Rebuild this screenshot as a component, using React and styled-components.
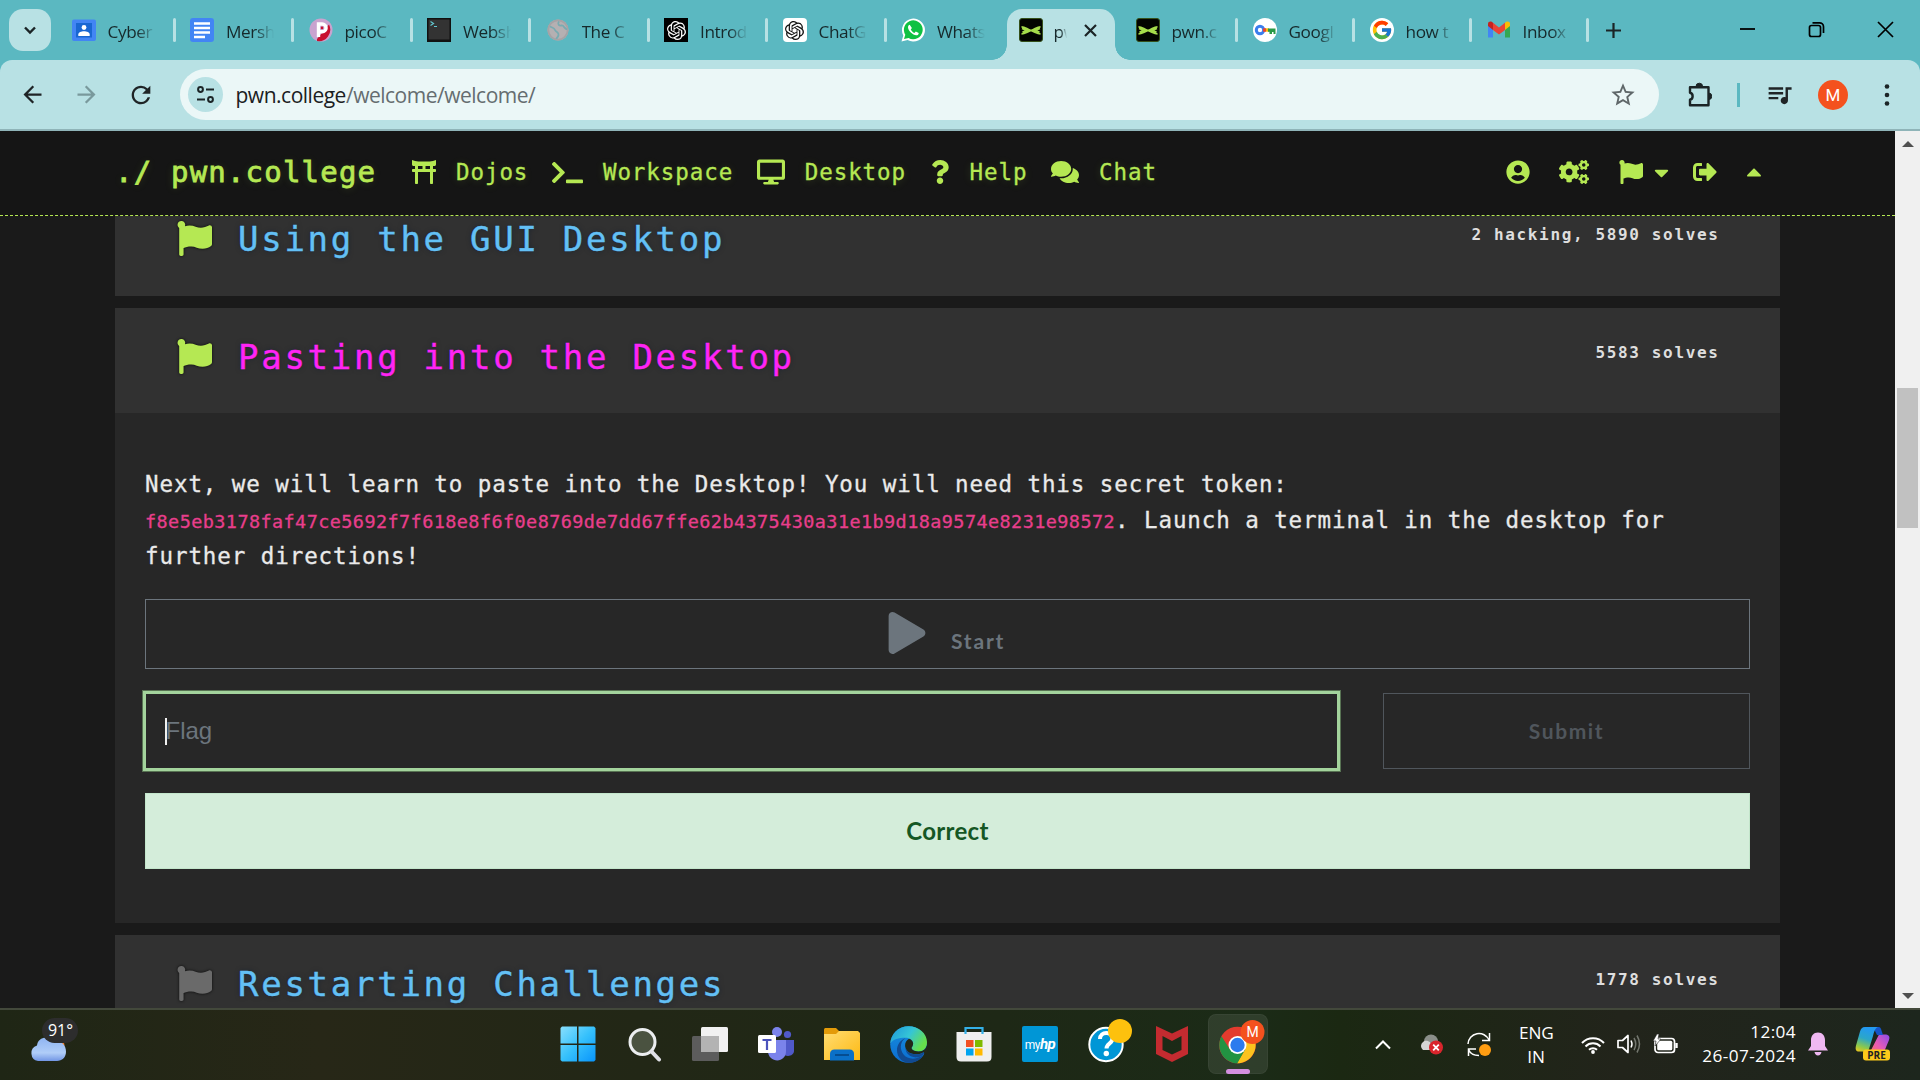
import React from "react";
import styled, { createGlobalStyle } from "styled-components";
import {
  FaToriiGate, FaTerminal, FaDesktop, FaQuestion, FaComments, FaUserCircle, FaCogs,
  FaFlag, FaCaretDown, FaCaretUp, FaSignOutAlt, FaPlay,
} from "react-icons/fa";
import { MdQueueMusic, MdStarOutline, MdArrowBack, MdArrowForward, MdRefresh } from "react-icons/md";
import { SiOpenai } from "react-icons/si";
import { FcGoogle } from "react-icons/fc";

const UI = `"Open Sans", "Noto Sans", sans-serif`;
const MONO = `"DejaVu Sans Mono", "Liberation Mono", monospace`;
const LIME = "#b5e853";

const Global = createGlobalStyle`
  * { box-sizing: border-box; }
  body { margin: 0; background: #1a1a1a; overflow: hidden; }
  svg { display: block; flex: none; }
`;

const Screen = styled.div`
  width: 1920px;
  height: 1080px;
  display: flex;
  flex-direction: column;
  overflow: hidden;
  font-family: ${UI};
`;

/* ---------- browser tabs ---------- */
const TabStrip = styled.div`
  height: 60px;
  flex: none;
  display: flex;
  align-items: flex-start;
  background: #5bb8c1;
  padding-left: 9px;
`;
const TabSearch = styled.div`
  width: 42px;
  height: 42px;
  margin: 9px 6px 0 0;
  border-radius: 14px;
  background: #b8e1e4;
  display: grid;
  place-items: center;
`;
const Tab = styled.div`
  width: ${(p) => p.$w}px;
  height: 60px;
  padding: 0 0 0 14.5px;
  display: flex;
  align-items: center;
`;
const Favicon = styled.div`
  width: 24px;
  height: 24px;
  flex: none;
`;
const TabTitle = styled.div`
  width: ${(p) => p.$w || 48}px;
  margin-left: ${(p) => (p.$w ? 11 : 12)}px;
  flex: none;
  overflow: hidden;
  white-space: nowrap;
  font-size: 17.2px;
  letter-spacing: -0.4px;
  line-height: 24px;
  padding-top: 3px;
  color: #16292b;
  mask-image: linear-gradient(90deg, #000 ${(p) => (p.$w ? 50 : 60)}%, transparent 100%);
`;
const Separator = styled.div`
  width: 3px;
  height: 24px;
  margin-left: auto;
  border-radius: 2px;
  background: ${(p) => (p.$hidden ? "transparent" : "#b8e1e4")};
`;
const ActiveTab = styled.div`
  width: 108px;
  height: 51px;
  margin: 9px 6.5px 0 1px;
  padding: 0 0 9px 12px;
  display: flex;
  align-items: center;
  border-radius: 15px 15px 0 0;
  background: #b8e1e4;
  position: relative;
  &::before, &::after {
    content: "";
    position: absolute;
    bottom: 0;
    width: 15px;
    height: 15px;
  }
  &::before { left: -15px; background: radial-gradient(circle at 0 0, transparent 14.5px, #b8e1e4 15px); }
  &::after { right: -15px; background: radial-gradient(circle at 100% 0, transparent 14.5px, #b8e1e4 15px); }
`;
const CloseTab = styled.div`
  margin-left: 16px;
`;
const NewTab = styled.div`
  margin: 22px 0 0 15.5px;
`;
const WindowControls = styled.div`
  margin: 21px 26px 0 auto;
  display: flex;
  gap: 52px;
`;

/* ---------- browser toolbar ---------- */
const ToolbarWrap = styled.div`
  flex: none;
  background: #5bb8c1;
`;
const Toolbar = styled.div`
  height: 71px;
  display: flex;
  align-items: center;
  padding: 0 21px 0 19px;
  background: #b8e1e4;
  border-bottom: 2px solid #8fb4b8;
  border-radius: 12px 12px 0 0;
  color: #1f2426;
`;
const NavButton = styled.div`
  width: 54px;
  color: ${(p) => (p.$off ? "#79999c" : "#1f2426")};
`;
const Omnibox = styled.div`
  width: 1479px;
  height: 51px;
  margin-left: -1px;
  padding: 0 22px 0 8px;
  display: flex;
  align-items: center;
  border-radius: 26px;
  background: #ebf7f7;
  color: #5f6769;
`;
const SiteInfo = styled.div`
  width: 35px;
  height: 35px;
  border-radius: 50%;
  background: #b8e1e4;
  display: grid;
  place-items: center;
`;
const Url = styled.div`
  flex: 1;
  margin-left: 12.5px;
  font-size: 21px;
  line-height: 30px;
  letter-spacing: -0.49px;
  color: #656d70;
  span { color: #1b2022; }
`;
const ToolGroup = styled.div`
  flex: 1;
  display: flex;
  align-items: center;
  padding-left: 28px;
`;
const ToolDivider = styled.div`
  width: 3px;
  height: 24px;
  margin: 0 25px;
  background: #5bb8c1;
`;
const Avatar = styled.div`
  width: 30px;
  height: 30px;
  margin: 0 36px 0 24px;
  border-radius: 50%;
  background: #f4511e;
  color: #fff;
  font: 17px/30px Roboto, sans-serif;
  text-align: center;
`;

/* ---------- web page ---------- */
const Viewport = styled.div`
  height: 877px;
  flex: none;
  display: flex;
`;
const Page = styled.div`
  width: 1895px;
  display: flex;
  flex-direction: column;
  background: #1a1a1a;
  overflow: hidden;
`;
const NavBar = styled.div`
  height: 85px;
  flex: none;
  display: flex;
  align-items: center;
  padding: 0 129px 2px 115px;
  background: #151515;
  border-bottom: 1px dashed ${LIME};
  color: ${LIME};
  font-family: ${MONO};
  text-shadow: 0 1px 8px rgba(181, 232, 83, 0.18);
`;
const Brand = styled.div`
  width: 297px;
  font-size: 29px;
  -webkit-text-stroke: 0.8px ${LIME};
  letter-spacing: 1.2px;
  line-height: 40px;
  white-space: pre;
`;
const NavItem = styled.div`
  display: flex;
  align-items: center;
  margin-right: 23.6px;
`;
const NavIcon = styled.div`
  width: ${(p) => p.$w}px;
  margin-right: 20px;
  display: flex;
  justify-content: center;
`;
const NavLabel = styled.div`
  font-size: 22.5px;
  letter-spacing: 0.92px;
  line-height: 30px;
  -webkit-text-stroke: 0.3px ${LIME};
`;
const NavActions = styled.div`
  display: flex;
  align-items: center;
  margin-left: auto;
`;
const Action = styled.div`
  margin-left: ${(p) => p.$gap}px;
`;
const Challenges = styled.div`
  padding: 0 115px;
  display: flex;
  flex-direction: column;
  gap: 12px;
`;
const HeaderRow = styled.div`
  height: ${(p) => p.$h}px;
  padding: ${(p) => p.$top}px 61.5px 0 62px;
  display: flex;
  align-items: flex-start;
  background: #313131;
  overflow: hidden;
`;
const FlagMark = styled.div`
  color: ${(p) => (p.$solved ? LIME : "#6a6a6a")};
  filter: drop-shadow(0 0 1.5px rgba(0, 0, 0, 0.8));
`;
const Title = styled.div`
  margin: -7px 0 0 26px;
  font-family: ${MONO};
  font-size: 34px;
  letter-spacing: 2.73px;
  line-height: 50px;
  white-space: nowrap;
  color: ${(p) => (p.$open ? "#ff24f5" : "#63c0f5")};
  -webkit-text-stroke: 0.4px ${(p) => (p.$open ? "#ff24f5" : "#63c0f5")};
  text-shadow: 0 0 5px rgba(0, 25, 50, 0.5);
`;
const Solves = styled.div`
  margin: 0 -1px 0 auto;
  font-family: ${MONO};
  font-weight: 700;
  font-size: 16px;
  letter-spacing: 1.64px;
  line-height: 28px;
  color: #dedede;
`;
const Body = styled.div`
  height: 510px;
  padding: 53px 30px 0;
  background: #272727;
`;
const Text = styled.div`
  height: 133px;
  font-family: ${MONO};
  font-size: 22.5px;
  letter-spacing: 0.92px;
  line-height: 36px;
  white-space: nowrap;
  color: #eaeaea;
  -webkit-text-stroke: 0.3px currentColor;
`;
const Token = styled.span`
  font-size: 18.5px;
  letter-spacing: 0.41px;
  line-height: 20px;
  color: #e83e8c;
`;
const StartButton = styled.div`
  height: 70px;
  border: 1px solid #6c757d;
  padding-left: 740px;
  display: flex;
  align-items: flex-start;
  color: #6c757d;
  font: 700 21px/30px Lato, sans-serif;
  letter-spacing: 1.8px;
`;
const StartIcon = styled.div`
  margin: 12px 23px 0 0;
`;
const StartLabel = styled.div`
  margin-top: 26px;
`;
const FormRow = styled.div`
  display: flex;
  justify-content: space-between;
  margin: 24px 0;
`;
const FlagInput = styled.div`
  width: 1193px;
  height: 76px;
  padding-left: 19px;
  display: flex;
  align-items: center;
  border: 1px solid #a3d39c;
  box-shadow: 0 0 0 2px #a3d39c, 0 0 0 3px #587353;
  color: #6c757d;
  font: 24px/30px "Liberation Sans", Arial, sans-serif;
`;
const Caret = styled.div`
  width: 2px;
  height: 27px;
  margin-right: -1.5px;
  background: #f0f0f0;
`;
const SubmitButton = styled.div`
  width: 367px;
  height: 76px;
  border: 1px solid #50565c;
  color: #50565c;
  font: 700 21px/74px Lato, sans-serif;
  letter-spacing: 1.6px;
  text-align: center;
`;
const Result = styled.div`
  height: 76px;
  background: #d4edda;
  border: 1px solid #c3e6cb;
  color: #155724;
  font: 700 24px/74px Lato, sans-serif;
  letter-spacing: 0.3px;
  text-align: center;
`;
const ScrollBar = styled.div`
  width: 25px;
  display: flex;
  flex-direction: column;
  align-items: center;
  background: #f0f0f0;
  padding: 10px 0 9px;
`;
const Thumb = styled.div`
  width: 21px;
  height: 140px;
  margin: 241px 0 auto;
  background: #c1c1c1;
`;

/* ---------- taskbar ---------- */
const TaskBar = styled.div`
  height: 72px;
  flex: none;
  display: flex;
  align-items: flex-start;
  border-top: 2px solid #43493b;
  background: linear-gradient(90deg, #1f2615 0, #272717 320px, #222716 640px, #1e2816 1000px, #1b2b17 1250px, #1b2812 1340px, #22241b 1620px, #1d261d 1920px);
`;
const Weather = styled.div`
  width: 545px;
  padding: 6px 0 0 30px;
`;
const Slot = styled.div`
  width: 66px;
  height: 68px;
  display: grid;
  place-items: center;
`;
const ActiveSlot = styled.div`
  width: 60px;
  height: 60px;
  border-radius: 8px;
  background: rgba(255, 255, 255, 0.09);
  border: 1px solid rgba(255, 255, 255, 0.04);
`;
const Tray = styled.div`
  height: 68px;
  margin-left: auto;
  padding-right: 29px;
  display: flex;
  align-items: center;
  color: #fff;
  font-size: 17.2px;
  line-height: 24px;
`;
const TrayIcon = styled.div`
  margin-right: ${(p) => p.$gap}px;
`;
const Lang = styled.div`
  width: 34px;
  margin-right: 28px;
  padding-top: 2px;
  text-align: center;
  white-space: nowrap;
  letter-spacing: -0.1px;
`;
const Clock = styled.div`
  width: 94px;
  margin-right: 12px;
  text-align: right;
  white-space: nowrap;
  letter-spacing: 0.4px;
`;

/* ---------- favicons ---------- */
const Ico = ({ children, vb = "0 0 24 24", w = 24, h = 24 }) => (
  <svg width={w} height={h} viewBox={vb} fill="none">{children}</svg>
);
const ClassroomIcon = () => (
  <Ico><rect y="1.5" width="24" height="21.5" rx="2" fill="#4285f4" /><rect x="4" y="5" width="16" height="14.5" fill="#1967d2" /><circle cx="12" cy="9.5" r="2.4" fill="#fff" /><path d="M6.3 18v-1.6c0-2 3-3.2 5.7-3.2s5.7 1.2 5.7 3.2V18z" fill="#fff" /></Ico>
);
const DocsIcon = () => (
  <Ico><rect width="24" height="24" rx="3" fill="#4285f4" /><path d="M4 5.5h16M4 10h16M4 14.5h16M4 19h11" stroke="#fff" strokeWidth="2.4" /></Ico>
);
const PicoIcon = () => (
  <Ico><circle cx="12" cy="12" r="11.5" fill="#c9a3cf" /><path d="M8 21L20 6.5A11.5 11.5 0 0 1 8 23z" fill="#c8102e" /><path d="M9.500 19V6h3.700a3.900 3.900 0 0 1 0 7.800H9.500" stroke="#fff" strokeWidth="3.4" /><circle cx="13" cy="9.900" r="1.300" fill="#c8102e" /></Ico>
);
const ShellIcon = () => (
  <Ico><rect width="24" height="24" fill="#111" /><rect x="1.500" y="1.500" width="21" height="20" fill="#333" /><path d="M3.500 3.500l3 2-3 2M7 8.500h3" stroke="#62c6cf" strokeWidth="1.2" /></Ico>
);
const GlobeIcon = () => (
  <Ico><circle cx="12" cy="12" r="10.500" fill="#b5b0b2" /><circle cx="12" cy="12" r="9.700" stroke="#a5a3a6" strokeWidth="1.800" /><path d="M4 8.500c2.500 1.500 4 1 5 3.500s4 2 3.500 5-2 2-2 4M13 3.500c-2 2.500 0 4.500 2.500 4s2.500 3 5.500 4" stroke="#78abb1" strokeWidth="1.800" /></Ico>
);
const WhatsIcon = () => (
  <Ico><path d="M.5 23.500l1.800-6A11.500 11.500 0 1 1 6.600 22z" fill="#fff" /><path d="M3 21l1.300-4.300a9.400 9.400 0 1 1 3.300 3.200z" fill="#0fc143" /><path d="M8.700 6.800c-.8 0-1.700 1-1.700 2.500 0 3.400 4.800 8 8.300 8 1.500 0 2.400-1.100 2.400-2.400l-2.900-1.500-1.400 1.500c-1.500-.6-3-2-3.600-3.500l1.100-1.500z" fill="#fff" /></Ico>
);
const PwnIcon = () => (
  <Ico><rect x=".5" y=".5" width="23" height="23" rx="2.500" fill="#020400" stroke="#35501a" /><path d="M2.500 8.800c3.500 0 5.500 2.500 9.500 3.700 4-1.200 6-3.700 9.500-3.700M2.500 15.800c3.500 0 5.500-2 9.500-3.300 4 1.300 6 3.300 9.500 3.300M3 10.500l5 2-4.500 1.500M21 10.500l-5 2 4.500 1.500" stroke="#a5dc4b" strokeWidth="1.800" /></Ico>
);
const KeyIcon = () => (
  <Ico><circle cx="12" cy="12" r="12" fill="#fff" /><circle cx="7" cy="12" r="3.700" stroke="#3b7ded" strokeWidth="3" /><path d="M12 12h4" stroke="#fbbc04" strokeWidth="3.400" /><path d="M15 10.400h7.500V16h-2v-2h-1.500v2h-2.500v-2.300H15z" fill="#2a9947" /><path d="M10 12h3" stroke="#ea4335" strokeWidth="3.400" /></Ico>
);
const GmailIcon = () => (
  <Ico><path d="M1 7v12.500h5V11z" fill="#4285f4" /><path d="M23 7v12.500h-5V11z" fill="#34a853" /><path d="M1 8V6c0-2.500 2.700-3 4-2l1 .8V12z" fill="#c5221f" /><path d="M23 8V6c0-2.500-2.700-3-4-2l-1 .8V12z" fill="#fbbc04" /><path d="M6 4.800V12l6 4.500 6-4.500V4.800l-6 4.700z" fill="#ea4335" /></Ico>
);
const GptBox = styled.div`
  width: 24px;
  height: 24px;
  border-radius: ${(p) => (p.$dark ? 0 : 4)}px;
  display: grid;
  place-items: center;
  background: ${(p) => (p.$dark ? "#000" : "#fff")};
  color: ${(p) => (p.$dark ? "#fff" : "#111")};
`;
const GoogleBox = styled.div`
  width: 24px;
  height: 24px;
  border-radius: 50%;
  display: grid;
  place-items: center;
  background: #fff;
`;

const tabsBefore = [
  ["Cyber", <ClassroomIcon />], ["Mersh", <DocsIcon />], ["picoC", <PicoIcon />],
  ["Websh", <ShellIcon />], ["The C", <GlobeIcon />],
  ["Introd", <GptBox $dark><SiOpenai size={19} /></GptBox>],
  ["ChatG", <GptBox><SiOpenai size={19} /></GptBox>],
  ["Whats", <WhatsIcon />],
];
const tabsAfter = [
  ["pwn.c", <PwnIcon />], ["Googl", <KeyIcon />],
  ["how t", <GoogleBox><FcGoogle size={22} /></GoogleBox>], ["Inbox", <GmailIcon />],
];

/* ---------- taskbar icons ---------- */
const WeatherIcon = () => (
  <svg width="50" height="48" viewBox="30 1016 50 48">
    <defs><linearGradient id="cl" x1="0" y1="0" x2="0" y2="1"><stop offset="0" stopColor="#8fb4f2" /><stop offset=".65" stopColor="#b0cdf8" /><stop offset="1" stopColor="#7296e4" /></linearGradient></defs>
    <circle cx="57" cy="1045" r="7.500" fill="#f47a20" />
    <path d="M38 1061a8 8 0 0 1-1-15.500c1-9 12-10 15-4 7-2 14 2 14 10 0 6-4 9.500-9 9.500z" fill="url(#cl)" />
    <rect x="42" y="1018" width="36" height="25" rx="12.500" fill="#2d2d2d" />
    <text x="60.500" y="1036" textAnchor="middle" fontFamily="Open Sans, sans-serif" fontSize="16" fill="#fff">91°</text>
  </svg>
);
const WinIcon = () => (
  <Ico w={36} h={36} vb="0 0 36 36">
    <defs><linearGradient id="wn" x1="0" y1="0" x2="36" y2="36" gradientUnits="userSpaceOnUse"><stop stopColor="#8be0fd" /><stop offset=".5" stopColor="#36c1fc" /><stop offset="1" stopColor="#0793fb" /></linearGradient></defs>
    <path d="M2 .5h15v17H.5V2zM18.500.5H34l1.500 1.500v15.500h-17zM.5 19H17v16.500H2L.5 34zM18.500 19h17v15L34 35.500H18.500z" fill="url(#wn)" />
  </Ico>
);
const SearchIcon = () => (
  <Ico w={36} h={36} vb="0 0 36 36"><circle cx="16.500" cy="16" r="12.500" fill="#4a5240" stroke="#eceef0" strokeWidth="3" /><path d="M25.500 25.500l7.500 8" stroke="#dfe0e6" strokeWidth="4" strokeLinecap="round" /></Ico>
);
const TaskViewIcon = () => (
  <Ico w={36} h={36} vb="0 0 36 36"><rect y="10" width="27" height="25" rx="1.500" fill="#5c5c5c" /><rect x="9" y="1" width="27" height="25" rx="1.500" fill="#f1f1f1" /><rect x="9" y="10" width="18" height="16" fill="#b3b3b3" /></Ico>
);
const TeamsIcon = () => (
  <Ico w={36} h={36} vb="0 0 36 36">
    <circle cx="29.500" cy="8.500" r="3.600" fill="#5059c9" /><path d="M22 14h14v11c0 5-8 7-12 2z" fill="#5059c9" />
    <circle cx="19" cy="6" r="5" fill="#7b83eb" /><path d="M10 14h18v11c0 13-18 12-18 0z" fill="#7b83eb" />
    <rect y="9" width="18" height="18" rx="1.500" fill="#fff" /><path d="M4.500 14h9M9 14v10" stroke="#4b53bc" strokeWidth="2.200" />
  </Ico>
);
const FolderIcon = () => (
  <Ico w={36} h={36} vb="0 0 36 36">
    <defs><linearGradient id="fd" x1="0" y1="0" x2="1" y2="1"><stop stopColor="#ffdd72" /><stop offset="1" stopColor="#fdb913" /></linearGradient></defs>
    <path d="M0 4c0-1.500.5-2 2-2h10l4 4-4 5H0z" fill="#e39b09" /><path d="M0 8h12l3-3h19l2 2v27H0z" fill="url(#fd)" />
    <path d="M6 34.500V28c0-3 1.500-4.500 4.500-4.500h15c3 0 4.500 1.500 4.500 4.500v6.500z" fill="#0a70c8" /><path d="M11 29h14" stroke="#054d91" strokeWidth="2" />
  </Ico>
);
const EdgeIcon = () => (
  <Ico w={37} h={37} vb="0 0 36 36">
    <defs>
      <linearGradient id="e1" x1="0" y1="0" x2="1" y2=".5"><stop stopColor="#1d95dc" /><stop offset=".55" stopColor="#35c5d6" /><stop offset="1" stopColor="#66e04b" /></linearGradient>
      <linearGradient id="e2" x1="0" y1="0" x2="0" y2="1"><stop stopColor="#188fdd" /><stop offset="1" stopColor="#0b6cd0" /></linearGradient>
    </defs>
    <circle cx="18" cy="18" r="17.800" fill="url(#e2)" />
    <path d="M.3 17C1 7 9 .2 18 .2c10 0 18 7 18 15.500 0 6-4 9-8.500 9-4 0-6.500-1.700-6.500-3.200 0-1 1.500-2 1.500-4.500 0-3-3-5.500-7.500-5.500C8 11.500 3 13 .3 17z" fill="url(#e1)" />
    <path d="M15 12c-5 3-6 10-2 15.500 4 5 11 6 19.500 1C28 36 18 38 11 33 4 27 6 15 15 12z" fill="#114a91" />
    <path d="M22.500 17c0-2-1.500-4-4-4.700-3 1.700-4.500 5-3.500 8.700 1 4 5 6.500 10 6.500 4 0 7-1 9-3l2.500.5v-5c-2 3.500-5 4.700-9 4.700-4 0-6.500-1.700-6.500-3.200 0-1 1.500-2 1.500-4.500z" fill="#222817" />
    <path d="M34 24c-2 2.500-5 3.700-9 3.500-5 0-9-2.500-10-6.500 0 6 5 10 11 9.500 3 0 7-2 8-6.500z" fill="#114a91" />
    <path d="M36.500 17v10l-3.200.5c.3-1-.3-2.500-1.300-3.500 2.500-1.500 4-4 4.500-7z" fill="#222817" />
  </Ico>
);
const StoreIcon = () => (
  <Ico w={36} h={36} vb="0 0 36 36">
    <path d="M.5 6h35v25c0 3-1.500 4.500-4.500 4.500H5c-3 0-4.500-1.500-4.500-4.500z" fill="#efefef" /><path d="M9.500 8V2h17v6" stroke="#34b0e8" strokeWidth="2.200" />
    <path d="M10 14h7.500v7H10z" fill="#f25022" /><path d="M19 14h7.500v7H19z" fill="#7fba00" /><path d="M10 22.500h7.500v7H10z" fill="#00a4ef" /><path d="M19 22.500h7.500v7H19z" fill="#ffb900" />
  </Ico>
);
const HpIcon = styled.div`
  width: 36px;
  height: 36px;
  border-radius: 2px;
  background: #0096d6;
  color: #fff;
  font: 12px/36px Roboto, sans-serif;
  letter-spacing: -0.5px;
  text-align: center;
  b { font-size: 15px; font-style: italic; }
`;
const HelpIcon = () => (
  <svg width="52" height="44" viewBox="-8 0 52 44"><circle cx="18" cy="25.500" r="16.700" fill="#0096d6" stroke="#fff" strokeWidth="2" /><path d="M12 20c0-8 12.500-8 12.500-.5 0 5-6 5-6 10" stroke="#fff" strokeWidth="4" fill="none" /><circle cx="18.300" cy="34.500" r="2.700" fill="#fff" /><circle cx="32" cy="12" r="12" fill="#fdc10e" /></svg>
);
const HelpSlot = styled(Slot)`
  padding-bottom: 7px;
`;
const McIcon = () => (
  <Ico w={32} h={36} vb="0 0 32 36"><path d="M0 0l16 7.500L32 0v28L16 36 0 28zM6.500 10v14l9.500 4.500 9.500-4.500V10L16 15z" fill="#c42b30" fillRule="evenodd" /></Ico>
);
const ChromeIcon = () => (
  <svg width="58" height="60" viewBox="1210 1014 58 60">
    <circle cx="1238.500" cy="1044" r="18.300" fill="#e33b2e" />
    <path d="M1238.500 1035.500h16a18.300 18.300 0 0 1-16.500 26.800l8-13.800z" fill="#fcc31e" />
    <path d="M1222.500 1035.300a18.300 18.300 0 0 0 15.800 27l8-14h-15.500z" fill="#229342" />
    <circle cx="1238.500" cy="1044" r="9" fill="#fff" /><circle cx="1238.500" cy="1044" r="7.200" fill="#2c7bee" />
    <circle cx="1253.500" cy="1031" r="12" fill="#f4511e" />
    <text x="1253.500" y="1036" textAnchor="middle" fontFamily="Roboto, sans-serif" fontSize="14" fill="#fff">M</text>
    <rect x="1227" y="1068" width="24" height="5" rx="2.500" fill="#d48fe0" />
  </svg>
);
const CopilotIcon = () => (
  <svg width="36" height="36" viewBox="0 0 36 36">
    <defs>
      <linearGradient id="c1" x1=".3" y1="0" x2="0" y2="1"><stop stopColor="#2399f0" /><stop offset=".4" stopColor="#2ba7c8" /><stop offset=".75" stopColor="#8ec94a" /><stop offset="1" stopColor="#f5c518" /></linearGradient>
      <linearGradient id="c2" x1="1" y1="0" x2="0" y2="1"><stop stopColor="#8a4bea" /><stop offset=".5" stopColor="#e65bb5" /><stop offset="1" stopColor="#ff7a4a" /></linearGradient>
    </defs>
    <path d="M13 30h10c3 0 5-1 6-4l5-12c1.500-4-1-5.500-4-5.500h-6z" fill="url(#c2)" />
    <path d="M18 1h5c3 0 3 2 4 5l1 3h-6z" fill="#1554c8" />
    <path d="M10 1h13c-3 1-4 5-5 9l-4 13c-.5 2-2 2.500-4 2.500H4c-3 0-4-2-3-6l4-14c1-3 2-4.500 5-4.500z" fill="url(#c1)" />
    <rect x="8" y="23.500" width="27" height="11" rx="3" fill="#fcc91a" />
    <text x="21.500" y="32.500" textAnchor="middle" fontFamily="Open Sans, sans-serif" fontWeight="700" fontSize="10" fill="#222">PRE</text>
  </svg>
);

const Challenge = ({ title, solves, solved, open, height, top }) => (
  <HeaderRow $h={height} $top={top}>
    <FlagMark $solved={solved}><FaFlag size={35} /></FlagMark>
    <Title $open={open}>{title}</Title>
    <Solves>{solves}</Solves>
  </HeaderRow>
);

export default function App() {
  return (
    <Screen>
      <Global />
      <TabStrip>
        <TabSearch><Ico w={14} h={14} vb="0 0 14 14"><path d="M2 4.500l5 5 5-5" stroke="#1b2426" strokeWidth="2.400" /></Ico></TabSearch>
        {tabsBefore.map(([title, icon], i) => (
          <Tab key={title} $w={i === 7 ? 119 : 118.5}>
            <Favicon>{icon}</Favicon>
            <TabTitle>{title}</TabTitle>
            <Separator $hidden={i === 7} />
          </Tab>
        ))}
        <ActiveTab>
          <Favicon><PwnIcon /></Favicon>
          <TabTitle $w={13}>pw</TabTitle>
          <CloseTab><Ico w={15} h={15} vb="0 0 15 15"><path d="M2 2l11 11M13 2L2 13" stroke="#1b2426" strokeWidth="2.200" /></Ico></CloseTab>
        </ActiveTab>
        {tabsAfter.map(([title, icon]) => (
          <Tab key={title} $w={117}>
            <Favicon>{icon}</Favicon>
            <TabTitle>{title}</TabTitle>
            <Separator />
          </Tab>
        ))}
        <NewTab><Ico w={17} h={17} vb="0 0 17 17"><path d="M8.500 1v15M1 8.500h15" stroke="#1b2426" strokeWidth="2.200" /></Ico></NewTab>
        <WindowControls>
          <Ico w={17} h={17} vb="0 0 17 17"><path d="M1 8h15" stroke="#000" strokeWidth="1.800" /></Ico>
          <Ico w={17} h={17} vb="0 0 17 17"><rect x="1.500" y="4.500" width="11" height="11" rx="2" stroke="#000" strokeWidth="1.700" /><path d="M4.500 1.800h7a4 4 0 0 1 4 4V12" stroke="#000" strokeWidth="1.700" /></Ico>
          <Ico w={17} h={17} vb="0 0 17 17"><path d="M1 1l15 15M16 1L1 16" stroke="#000" strokeWidth="1.700" /></Ico>
        </WindowControls>
      </TabStrip>

      <ToolbarWrap>
        <Toolbar>
          <NavButton><MdArrowBack size={27} /></NavButton>
          <NavButton $off><MdArrowForward size={27} /></NavButton>
          <NavButton><MdRefresh size={28} /></NavButton>
          <Omnibox>
            <SiteInfo><Ico w={19} h={19} vb="0 0 19 19"><circle cx="4.500" cy="4.500" r="2.400" stroke="#1b2426" strokeWidth="2" /><path d="M10 4.500h8M1 14.500h8" stroke="#1b2426" strokeWidth="2" /><circle cx="14.500" cy="14.500" r="2.400" stroke="#1b2426" strokeWidth="2" /></Ico></SiteInfo>
            <Url><span>pwn.college</span>/welcome/welcome/</Url>
            <MdStarOutline size={28} />
          </Omnibox>
          <ToolGroup>
            <Ico w={25} h={26} vb="0 0 25 26"><path d="M3 5.200h18.500v18H3v-5.500c3.500-.5 3.500-6.500 0-7z" stroke="#1b2426" strokeWidth="2.400" strokeLinejoin="round" /><path d="M9 4.500a3.300 3.300 0 0 1 6.600 0zM21.500 11a3.300 3.300 0 0 1 0 6.600z" fill="#1b2426" stroke="#1b2426" /></Ico>
            <ToolDivider />
            <MdQueueMusic size={29} />
            <Avatar>M</Avatar>
            <Ico w={6} h={26} vb="0 0 6 26"><circle cx="3" cy="4.500" r="2.300" fill="#1b2426" /><circle cx="3" cy="13" r="2.300" fill="#1b2426" /><circle cx="3" cy="21.500" r="2.300" fill="#1b2426" /></Ico>
          </ToolGroup>
        </Toolbar>
      </ToolbarWrap>

      <Viewport>
        <Page>
          <NavBar>
            <Brand>./ pwn.college</Brand>
            <NavItem><NavIcon $w={24}><FaToriiGate size={24} /></NavIcon><NavLabel>Dojos</NavLabel></NavItem>
            <NavItem><NavIcon $w={31}><FaTerminal size={31} /></NavIcon><NavLabel>Workspace</NavLabel></NavItem>
            <NavItem><NavIcon $w={28}><FaDesktop size={28} /></NavIcon><NavLabel>Desktop</NavLabel></NavItem>
            <NavItem><NavIcon $w={20}><FaQuestion size={24} /></NavIcon><NavLabel>Help</NavLabel></NavItem>
            <NavItem><NavIcon $w={28}><FaComments size={28} /></NavIcon><NavLabel>Chat</NavLabel></NavItem>
            <NavActions>
              <Action $gap={0}><FaUserCircle size={24} /></Action>
              <Action $gap={29}><FaCogs size={30} /></Action>
              <Action $gap={30}><FaFlag size={24} /></Action>
              <Action $gap={7}><FaCaretDown size={23} /></Action>
              <Action $gap={20}><FaSignOutAlt size={24} /></Action>
              <Action $gap={25}><FaCaretUp size={24} /></Action>
            </NavActions>
          </NavBar>
          <Challenges>
            <Challenge title="Using the GUI Desktop" solves="2 hacking, 5890 solves" solved height={80} top={5} />
            <div>
              <Challenge title="Pasting into the Desktop" solves="5583 solves" solved open height={105} top={31} />
              <Body>
                <Text>
                  Next, we will learn to paste into the Desktop! You will need this secret token:<br />
                  <Token>f8e5eb3178faf47ce5692f7f618e8f6f0e8769de7dd67ffe62b4375430a31e1b9d18a9574e8231e98572</Token>. Launch a terminal in the desktop for<br />
                  further directions!
                </Text>
                <StartButton>
                  <StartIcon><FaPlay size={42} /></StartIcon>
                  <StartLabel>Start</StartLabel>
                </StartButton>
                <FormRow>
                  <FlagInput><Caret />Flag</FlagInput>
                  <SubmitButton>Submit</SubmitButton>
                </FormRow>
                <Result>Correct</Result>
              </Body>
            </div>
            <Challenge title="Restarting Challenges" solves="1778 solves" height={73} top={31} />
          </Challenges>
        </Page>
        <ScrollBar>
          <Ico w={12} h={6} vb="0 0 12 6"><path d="M0 6l6-6 6 6z" fill="#505050" /></Ico>
          <Thumb />
          <Ico w={12} h={6} vb="0 0 12 6"><path d="M0 0h12L6 6z" fill="#505050" /></Ico>
        </ScrollBar>
      </Viewport>

      <TaskBar>
        <Weather><WeatherIcon /></Weather>
        <Slot><WinIcon /></Slot>
        <Slot><SearchIcon /></Slot>
        <Slot><TaskViewIcon /></Slot>
        <Slot><TeamsIcon /></Slot>
        <Slot><FolderIcon /></Slot>
        <Slot><EdgeIcon /></Slot>
        <Slot><StoreIcon /></Slot>
        <Slot><HpIcon>my<b>hp</b></HpIcon></Slot>
        <HelpSlot><HelpIcon /></HelpSlot>
        <Slot><McIcon /></Slot>
        <Slot><ActiveSlot><ChromeIcon /></ActiveSlot></Slot>
        <Tray>
          <TrayIcon $gap={28}><Ico w={16} h={11} vb="0 0 16 11"><path d="M1 9.500l7-7 7 7" stroke="#fff" strokeWidth="2" /></Ico></TrayIcon>
          <TrayIcon $gap={24}><Ico w={24} h={21} vb="0 0 24 21"><circle cx="12" cy="7.500" r="7" fill="#8b8f8a" /><path d="M4 16a5 5 0 0 1 0-8c3-3 8 0 8 2l1 6z" fill="#d4d4d4" /><circle cx="17" cy="13.500" r="7" fill="#d9252c" /><path d="M14.200 10.700l5.600 5.600M19.800 10.700l-5.600 5.600" stroke="#fff" strokeWidth="1.800" /></Ico></TrayIcon>
          <TrayIcon $gap={28}><Ico w={24} h={25} vb="0 0 24 25"><path d="M1 12A11 11 0 0 1 22 8M22.500 1v7.500H15M12 23.500C7 23.500 3 21 1.500 17.500M1.500 24v-7H9" stroke="#fff" strokeWidth="1.500" /><circle cx="18" cy="18" r="6" fill="#ff9d12" /></Ico></TrayIcon>
          <Lang>ENG<br />IN</Lang>
          <TrayIcon $gap={12}><Ico w={24} h={19} vb="0 0 24 19"><path d="M1 8a15 15 0 0 1 22 0M4.500 11.500a10.500 10.500 0 0 1 15 0M8 14.800a5.700 5.700 0 0 1 8 0" stroke="#fff" strokeWidth="2" /><circle cx="12" cy="17" r="1.900" fill="#fff" /></Ico></TrayIcon>
          <TrayIcon $gap={12}><Ico w={24} h={20} vb="0 0 24 20"><path d="M1 6.500h4.500L11 1.500v17l-5.500-5H1z" stroke="#fff" strokeWidth="1.700" strokeLinejoin="round" /><path d="M14 6.500q2 3.500 0 7" stroke="#fff" strokeWidth="1.500" /><path d="M17 4q3.500 6 0 12M20 1.500q5 8.500 0 17" stroke="#74776f" strokeWidth="1.500" /></Ico></TrayIcon>
          <TrayIcon $gap={24}><Ico w={25} h={20} vb="0 0 25 20"><rect x="2" y="4.500" width="19.500" height="14" rx="3" stroke="#fff" strokeWidth="1.700" /><rect x="4.200" y="6.700" width="15.100" height="9.600" rx="1.500" fill="#fff" /><path d="M23.500 9v5" stroke="#fff" strokeWidth="2.400" /><path d="M4 0L0 7h3l-1 5 6-7H5l1-5z" fill="#fff" stroke="#222" strokeWidth=".6" /></Ico></TrayIcon>
          <Clock>12:04<br />26-07-2024</Clock>
          <TrayIcon $gap={27}><Ico w={20} h={24} vb="0 0 20 24"><path d="M10 .5c4.500 0 7 3.500 7 7.500v6l3 4.500H0L3 14V8C3 4 5.500.5 10 .5zM6.500 20h7c-.5 2-1.500 3.500-3.500 3.500S7 22 6.500 20z" fill="#efb8f2" /></Ico></TrayIcon>
          <CopilotIcon />
        </Tray>
      </TaskBar>
    </Screen>
  );
}
